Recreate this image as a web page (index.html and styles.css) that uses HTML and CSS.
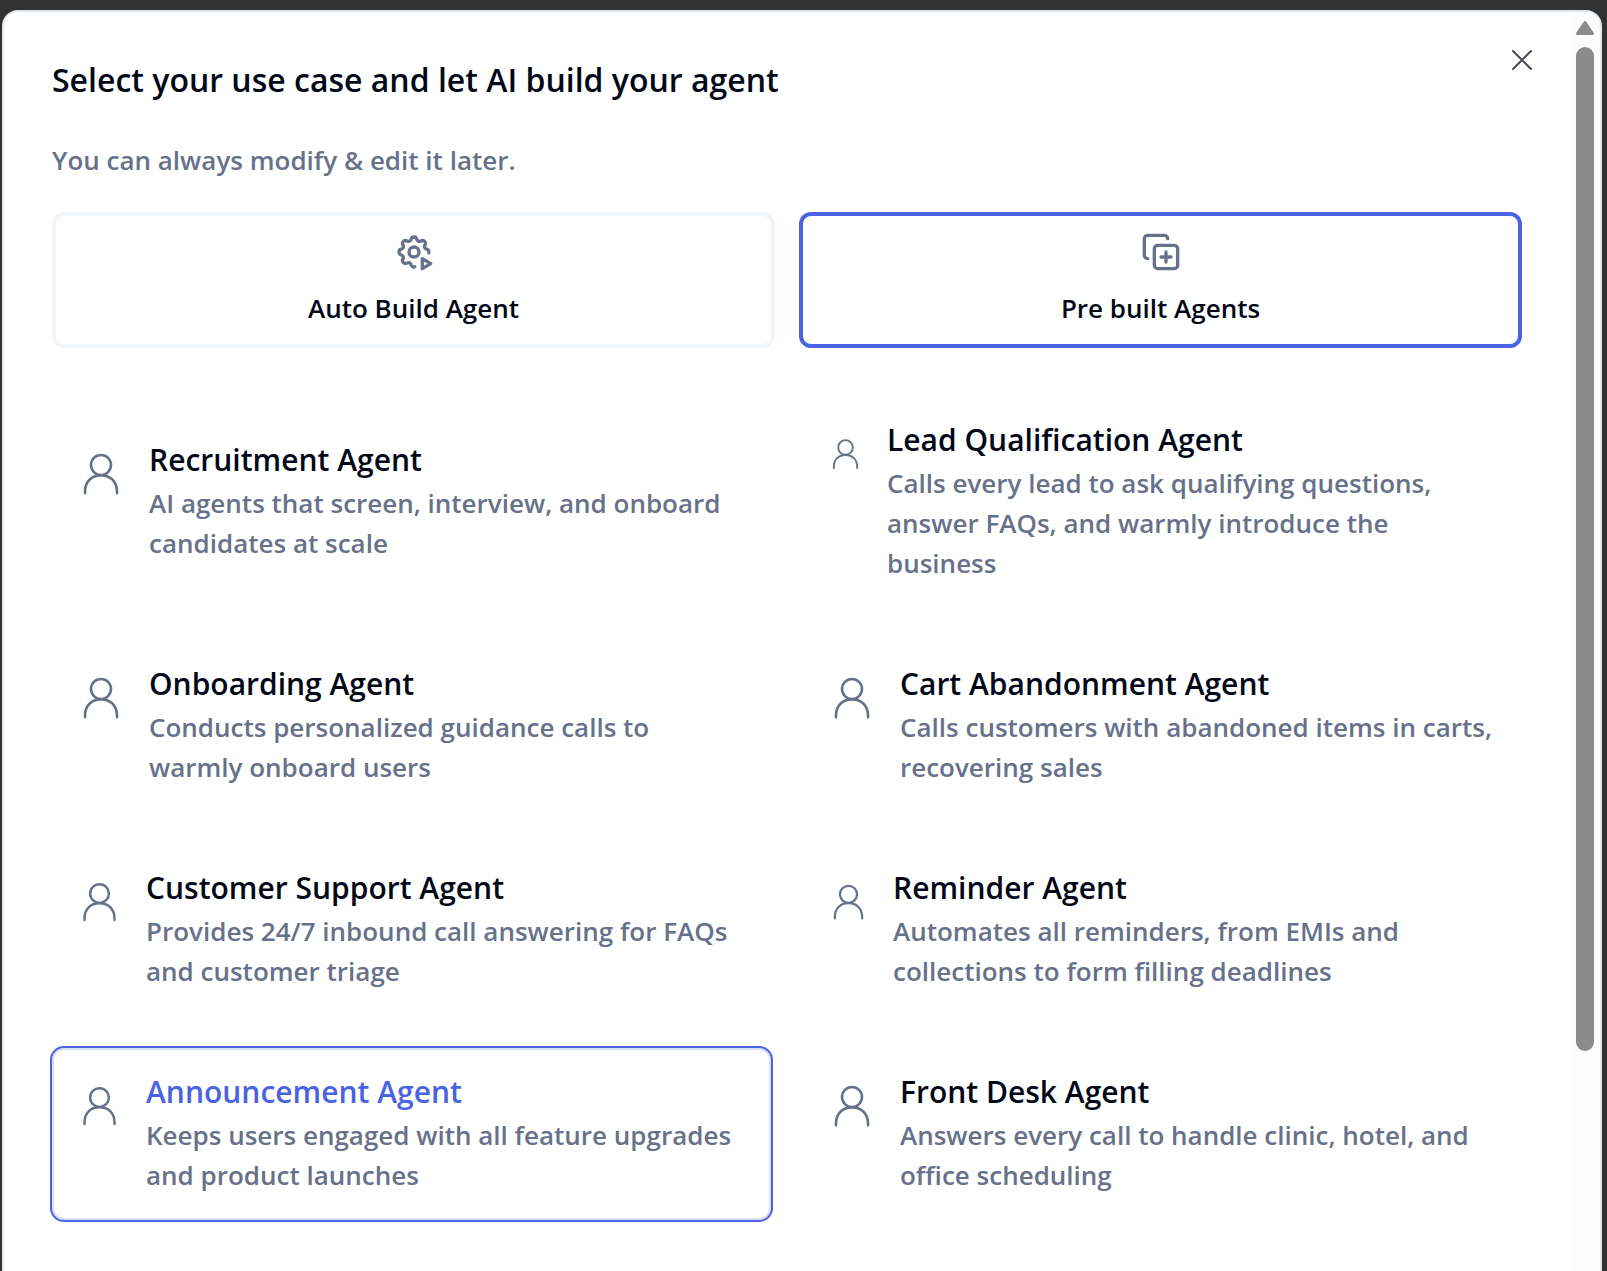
FILE: index.html
```html
<!DOCTYPE html>
<html lang="en">
	<head>
		<meta charset="utf-8" />
		<title>Select your use case</title>
		<link rel="stylesheet" href="styles.css">
	</head>
	<body>
		<svg class="sprite" aria-hidden="true">
			<symbol id="user" viewBox="0 0 24 24">
				<circle cx="12" cy="7.5" r="5"/>
				<path d="M4 21.600v-.8c0-5 3.200-8.100 8-8.100s8 3.100 8 8.100v.8"/>
			</symbol>
		</svg>
		<div class="dialog" role="dialog" aria-labelledby="dialog_title">
			<div class="content">
				<button class="close" type="button" aria-label="Close">
					<svg viewBox="0 0 20 20"><path d="M1 1l18 18M19 1L1 19"/></svg>
				</button>
				<h1 id="dialog_title">Select your use case and let AI build your agent</h1>
				<p class="subtitle">You can always modify &amp; edit it later.</p>
				<div class="tabs">
					<button class="tab" type="button">
						<svg viewBox="0 0 24 24">
							<path d="M12.4 20.9c-.8 .3-1.8-.1-2.1-1.200a1.724 1.724 0 0 0-2.573-1.066c-1.543 .94-3.310-.826-2.370-2.370a1.724 1.724 0 0 0-1.065-2.572c-1.756-.426-1.756-2.924 0-3.350a1.724 1.724 0 0 0 1.066-2.573c-.94-1.543 .826-3.310 2.370-2.370 1 .608 2.296 .070 2.572-1.065 .426-1.756 2.924-1.756 3.350 0a1.724 1.724 0 0 0 2.573 1.066c1.543-.94 3.310 .826 2.370 2.370a1.724 1.724 0 0 0 1.065 2.572c1.100 .270 1.500 1.300 1.200 2.200"/>
							<circle cx="12" cy="12" r="3"/>
							<path d="M17 16l5 3-5 3z"/>
						</svg>
						<span>Auto Build Agent</span>
					</button>
					<button class="tab active" type="button">
						<svg viewBox="0 0 24 24">
							<path d="M4 16a2 2 0 0 1-2-2V4a2 2 0 0 1 2-2h10a2 2 0 0 1 2 2"/>
							<rect x="8" y="8" width="14" height="14" rx="2"/>
							<path d="M15 12v6M12 15h6"/>
						</svg>
						<span>Pre built Agents</span>
					</button>
				</div>
				<div class="agents">
					<button class="agent" type="button">
						<svg class="icon"><use href="#user"/></svg>
						<span class="text"><strong>Recruitment Agent</strong>AI agents that screen, interview, and onboard candidates at scale</span>
					</button>
					<button class="agent" type="button">
						<svg class="icon icon_xs"><use href="#user"/></svg>
						<span class="text"><strong>Lead Qualification Agent</strong>Calls every lead to ask qualifying questions, answer FAQs, and warmly introduce the business</span>
					</button>
					<button class="agent" type="button">
						<svg class="icon"><use href="#user"/></svg>
						<span class="text"><strong>Onboarding Agent</strong>Conducts personalized guidance calls to warmly onboard users</span>
					</button>
					<button class="agent" type="button">
						<svg class="icon"><use href="#user"/></svg>
						<span class="text"><strong>Cart Abandonment Agent</strong>Calls customers with abandoned items in carts, recovering sales</span>
					</button>
					<button class="agent" type="button">
						<svg class="icon icon_md"><use href="#user"/></svg>
						<span class="text"><strong>Customer Support Agent</strong>Provides 24/7 inbound call answering for FAQs and customer triage</span>
					</button>
					<button class="agent" type="button">
						<svg class="icon icon_sm"><use href="#user"/></svg>
						<span class="text"><strong>Reminder Agent</strong>Automates all reminders, from EMIs and collections to form filling deadlines</span>
					</button>
					<button class="agent selected" type="button">
						<svg class="icon icon_md"><use href="#user"/></svg>
						<span class="text"><strong>Announcement Agent</strong>Keeps users engaged with all feature upgrades and product launches</span>
					</button>
					<button class="agent" type="button">
						<svg class="icon"><use href="#user"/></svg>
						<span class="text"><strong>Front Desk Agent</strong>Answers every call to handle clinic, hotel, and office scheduling</span>
					</button>
				</div>
			</div>
			<div class="scrollbar" aria-hidden="true">
				<svg viewBox="0 0 18 14"><path d="M9 1.500L16.500 12.500H1.500z"/></svg>
				<div class="thumb"></div>
			</div>
		</div>
	</body>
</html>
```
FILE: styles.css
```css
*{box-sizing:border-box;}
body,h1,p{margin:0;padding:0;}
body{background:#323232;color:#020817;font-family:"Open Sans","Noto Sans",sans-serif;font-size:26px;line-height:40px;font-weight:600;}
button{font:inherit;color:inherit;background:none;border:0;padding:0;margin:0;cursor:pointer;}
svg{fill:none;stroke:#67728a;stroke-width:2;stroke-linecap:round;stroke-linejoin:round;}
.sprite{display:none;}
.dialog{display:flex;height:calc(100vh - 10px);margin:10px 5px 0 2px;background:#fff;border:2px solid #e2e8f0;border-bottom:0;border-radius:16px 16px 0 0;overflow:hidden;}
.content{position:relative;flex:1;min-width:0;padding:44px 48px 0;}
.close{position:absolute;top:38px;right:38px;width:20px;height:20px;}
.close svg{display:block;width:20px;height:20px;stroke:#494c55;}
h1{font-size:32px;line-height:48px;font-weight:600;}
.subtitle{margin-top:36px;color:#67728a;}
.tabs{display:grid;grid-template-columns:1fr 1fr;gap:24px;margin-top:32px;}
.tab{display:flex;flex-direction:column;align-items:center;gap:16px;height:136px;padding-top:16px;border:4px solid #f1f5f9;border-radius:12px;}
.tab svg{width:40px;height:40px;}
.tab.active{border-color:#4a63e3;}
.agents{display:grid;grid-template-columns:1fr 1fr;gap:28px;margin:46px -2px 0;}
.agent{display:flex;align-items:flex-start;align-self:center;gap:24px;padding:21px 24px 25px 25px;border:2px solid transparent;border-radius:14px;text-align:left;}
.agent.selected{border-color:#4a63e3;box-shadow:inset 0 0 0 2px #dbe0f9;}
.agent.selected strong{color:#4a63e3;}
.icon{flex:none;width:48px;height:48px;margin-top:13px;stroke-width:1.3;}
.icon_md{width:45px;}
.icon_sm{width:41px;}
.icon_xs{width:35px;}
.text{color:#67728a;}
.text strong{display:block;color:#020817;font-size:30px;line-height:46px;font-weight:600;}
.scrollbar{display:flex;flex-direction:column;align-items:center;gap:12px;width:30px;padding-top:9px;background:#fcfcfc;}
.scrollbar svg{flex:none;width:18px;height:14px;fill:#8b8b8b;stroke:#8b8b8b;stroke-width:3;}
.thumb{width:18px;height:79vh;background:#8b8b8b;border-radius:9px;}
```
